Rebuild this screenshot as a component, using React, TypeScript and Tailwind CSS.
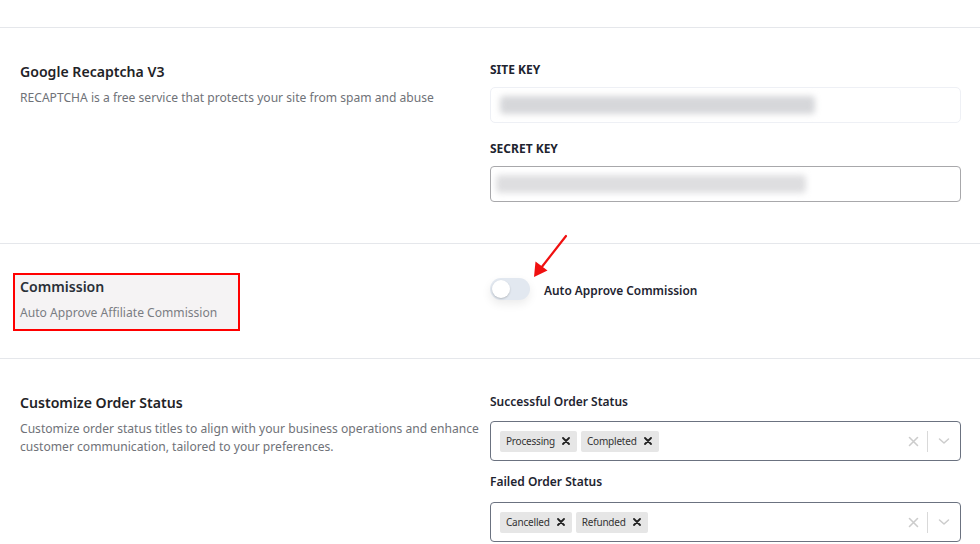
import React from "react";

const font = { fontFamily: '"Noto Sans", "Open Sans", sans-serif' };

function Chip({ label }: { label: string }) {
  return (
    <div className="flex h-[21px] items-center rounded-[2px] bg-[#e6e6e6] pl-[6px] text-[10px] tracking-[-0.2px] text-[#333]">
      <span>{label}</span>
      <span className="flex h-full w-[22px] items-center justify-center">
        <svg width="8" height="8" viewBox="0 0 8 8">
          <path d="M1 1L7 7M7 1L1 7" stroke="#222" strokeWidth="1.8" strokeLinecap="round" />
        </svg>
      </span>
    </div>
  );
}

function MultiSelect({ chips }: { chips: string[] }) {
  return (
    <div className="flex h-[40px] items-center rounded-[4px] border border-[#6b7280] pl-[9px]">
      <div className="flex flex-1 items-center gap-[4px]">
        {chips.map((c) => (
          <Chip key={c} label={c} />
        ))}
      </div>
      <div className="flex h-full items-center">
        <div className="flex w-[28px] items-center justify-center">
          <svg width="11" height="11" viewBox="0 0 11 11">
            <path d="M1.5 1.5L9.5 9.5M9.5 1.5L1.5 9.5" stroke="#cccccc" strokeWidth="1.6" strokeLinecap="round" />
          </svg>
        </div>
        <div className="h-[21px] w-px bg-[#d9d9d9]" />
        <div className="flex w-[32px] items-center justify-center">
          <svg width="12" height="8" viewBox="0 0 12 8">
            <path d="M1.5 2L6 6L10.5 2" stroke="#cccccc" strokeWidth="1.5" fill="none" strokeLinecap="round" strokeLinejoin="round" />
          </svg>
        </div>
      </div>
    </div>
  );
}

export default function App() {
  return (
    <div className="relative h-[544px] w-[980px] overflow-hidden bg-white" style={font}>
      <div className="h-[28px] border-b border-[#e5e7eb]" />

      {/* Section 1 */}
      <div className="grid grid-cols-[460px_1fr] gap-[10px] border-b border-[#e5e7eb] pb-[41px] pl-5 pr-[19px] pt-[34px]">
        <div>
          <div className="text-[14.1px] font-semibold leading-[20px] text-[#1f2327]">Google Recaptcha V3</div>
          <div className="mt-[6px] text-[12.1px] leading-[20px] text-[#6f7278]">
            RECAPTCHA is a free service that protects your site from spam and abuse
          </div>
        </div>
        <div>
          <div className="text-[12px] font-bold leading-[16px] text-[#1e2430]">SITE KEY</div>
          <div className="mt-[9px] flex h-[36px] items-center overflow-hidden rounded-[5px] border border-[#eef0f5] pl-[9px]">
            <div className="h-[18px] w-[315px] rounded-sm bg-[#d6d7da] blur-[3px]" />
          </div>
          <div className="mt-[18px] text-[12px] font-bold leading-[16px] text-[#1e2430]">SECRET KEY</div>
          <div className="mt-[9px] flex h-[36px] items-center overflow-hidden rounded-[4px] border border-[#a8a8ab] pl-[5px]">
            <div className="h-[18px] w-[310px] rounded-sm bg-[#dedee0] blur-[3px]" />
          </div>
        </div>
      </div>

      {/* Section 2 */}
      <div className="grid grid-cols-[460px_1fr] gap-[10px] border-b border-[#e5e7eb] pb-[27px] pl-5 pr-[19px] pt-[29px]">
        <div>
          <div className="-ml-[7px] w-[227px] border-2 border-[#ff0000] bg-[#f5f3f4] pb-[6px] pl-[5px] pt-[2px]">
            <div className="text-[14.1px] font-semibold leading-[20px] text-[#2a3038]">Commission</div>
            <div className="mt-[6px] text-[12.1px] leading-[20px] text-[#7a7d83]">Auto Approve Affiliate Commission</div>
          </div>
        </div>
        <div className="flex items-start pt-[5px]">
          <div className="relative h-[22px] w-[40px] rounded-full bg-[#e2e8f0] shadow-[0_4px_10px_rgba(0,0,0,0.08)]">
            <div className="absolute left-[2px] top-[2px] h-[18px] w-[18px] rounded-full bg-white shadow-[0_1px_2px_rgba(0,0,0,0.2)]" />
          </div>
          <div className="ml-[14px] pt-[1px] text-[11.9px] font-semibold leading-[22px] text-[#1e2430]">Auto Approve Commission</div>
        </div>
      </div>

      {/* Section 3 */}
      <div className="grid grid-cols-[460px_1fr] gap-[10px] pl-5 pr-[19px] pt-[34px]">
        <div>
          <div className="text-[14.1px] font-semibold leading-[20px] text-[#1f2327]">Customize Order Status</div>
          <div className="mt-[7px] text-[12.1px] leading-[18px] text-[#6f7278]">
            Customize order status titles to align with your business operations and enhance customer communication, tailored to your preferences.
          </div>
        </div>
        <div>
          <div className="text-[12px] font-semibold leading-[18px] text-[#1e2430]">Successful Order Status</div>
          <div className="mt-[10px]">
            <MultiSelect chips={["Processing", "Completed"]} />
          </div>
          <div className="mt-[12px] text-[12px] font-semibold leading-[18px] text-[#1e2430]">Failed Order Status</div>
          <div className="mt-[11px]">
            <MultiSelect chips={["Cancelled", "Refunded"]} />
          </div>
        </div>
      </div>

      {/* Red annotation arrow */}
      <svg className="pointer-events-none absolute left-0 top-0" width="980" height="544">
        <line x1="566" y1="236" x2="541" y2="268" stroke="#f01010" strokeWidth="2.2" strokeLinecap="round" />
        <path d="M534 277 L535.5 261.5 L547.5 270.5 Z" fill="#f01010" />
      </svg>
    </div>
  );
}
